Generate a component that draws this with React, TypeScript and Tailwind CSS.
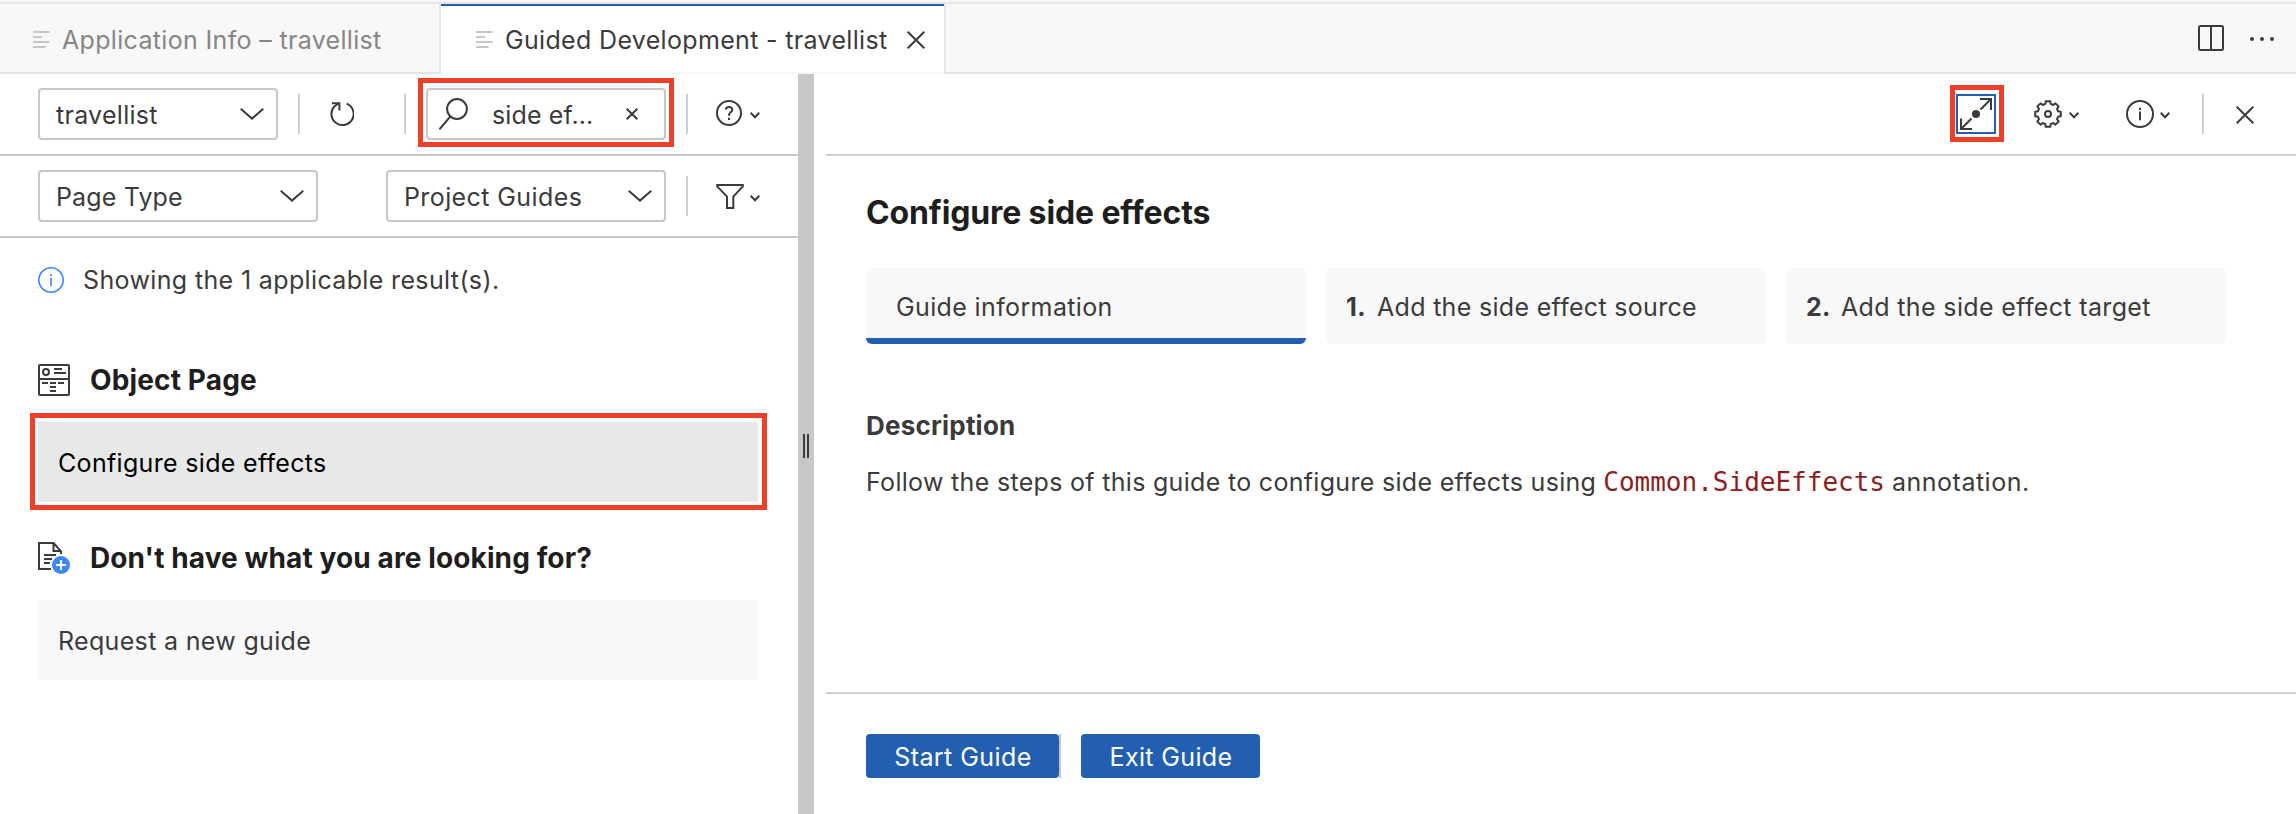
import React from "react";

const INK = "#3b3b3b";

function LinesIcon() {
  return (
    <svg width="17" height="18" viewBox="0 0 17 18" fill="#c6c6c6" className="shrink-0">
      <path d="M0 0h16.5v2H0zM0 5h9v2H0zM0 10h16.5v2H0zM0 15h12.5v2H0z" />
    </svg>
  );
}

function CloseIcon({ size = 18 }: { size?: number }) {
  return (
    <svg width={size} height={size} viewBox={`0 0 ${size} ${size}`} fill="none" stroke={INK} strokeWidth="2" className="shrink-0">
      <path d={`M.7 .7L${size - 0.7} ${size - 0.7}M${size - 0.7} .7L.7 ${size - 0.7}`} />
    </svg>
  );
}

function ChevronIcon() {
  return (
    <svg width="24" height="12" viewBox="0 0 24 12" fill="none" stroke={INK} strokeWidth="2" className="shrink-0">
      <path d="M.7 .8L12 10.6L23.3 .8" />
    </svg>
  );
}

function SmallChevron({ className }: { className: string }) {
  return (
    <svg width="10" height="7" viewBox="0 0 10 7" fill="none" stroke={INK} strokeWidth="2" className={`shrink-0 ${className}`}>
      <path d="M.7 .8L5 5.2L9.3 .8" />
    </svg>
  );
}

function RefreshIcon() {
  return (
    <svg width="24" height="26" viewBox="0 0 24 26" fill="none" stroke={INK} strokeWidth="2" className="shrink-0">
      <path d="M16.6 2.6A11.1 11.1 0 1 1 4.4 5.4L8.6 2.2" />
      <path d="M2 2.2H9.4V9.4" />
    </svg>
  );
}

function SearchIcon() {
  return (
    <svg width="30" height="33" viewBox="0 0 30 33" fill="none" stroke={INK} strokeWidth="2" className="shrink-0">
      <circle cx="18" cy="11" r="9.9" />
      <path d="M.4 31.4L11.2 18.6" />
    </svg>
  );
}

function HelpIcon() {
  return (
    <svg width="26" height="26" viewBox="0 0 26 26" fill="none" stroke={INK} strokeWidth="2" className="shrink-0">
      <circle cx="13" cy="13" r="12" />
      <path d="M9.8 9.6C9.9 7.9 11.2 7 13 7C14.9 7 16.3 8 16.3 9.8C16.3 12.2 13 12.4 13 15V15.8" />
      <path d="M13 17.8V20" />
    </svg>
  );
}

function InfoIcon({ size, color, width }: { size: number; color: string; width: number }) {
  const c = size / 2;
  return (
    <svg width={size} height={size} viewBox={`0 0 ${size} ${size}`} fill="none" stroke={color} strokeWidth={width} className="shrink-0">
      <circle cx={c} cy={c} r={c - width / 2} />
      <path d={`M${c} ${c - 6.2}v2.2M${c} ${c - 2.6}v8.8`} />
    </svg>
  );
}

function FunnelIcon() {
  return (
    <svg width="28" height="26" viewBox="0 0 28 26" fill="none" stroke={INK} strokeWidth="2" className="shrink-0">
      <path d="M1.2 2H26.8V3.4L17.3 13.6V25H11V13.6L1.2 3.4Z" />
    </svg>
  );
}

function ExpandIcon() {
  return (
    <svg width="32" height="32" viewBox="0 0 32 32" fill="none" stroke={INK} strokeWidth="2" className="shrink-0">
      <path d="M20 1H31V12M31 1L20.5 11.5M1 20.5V31H12M1 31L11.5 20.5" />
      <circle cx="16" cy="16" r="4" fill={INK} stroke="none" />
    </svg>
  );
}

const gearPoints = Array.from({ length: 8 })
  .flatMap((_, k) =>
    [
      [-15, 10.4],
      [-10, 13],
      [10, 13],
      [15, 10.4],
    ].map(([deg, r]) => {
      const a = ((k * 45 + deg) * Math.PI) / 180;
      return `${(14 + r * Math.sin(a)).toFixed(2)},${(14 - r * Math.cos(a)).toFixed(2)}`;
    }),
  )
  .join(" ");

function GearIcon() {
  return (
    <svg width="28" height="28" viewBox="0 0 28 28" fill="none" stroke={INK} strokeWidth="2" strokeLinejoin="round" className="shrink-0">
      <polygon points={gearPoints} />
      <circle cx="14" cy="14" r="3" />
    </svg>
  );
}

function SplitIcon() {
  return (
    <svg width="26" height="26" viewBox="0 0 26 26" fill="none" stroke={INK} strokeWidth="2" className="shrink-0">
      <rect x="1" y="1" width="24" height="24" rx="1.5" />
      <path d="M13 1V25" />
    </svg>
  );
}

function ObjectPageIcon() {
  return (
    <svg width="32" height="32" viewBox="0 0 32 32" fill="none" stroke={INK} strokeWidth="2" className="shrink-0">
      <rect x="1" y="1" width="30" height="30" rx="1" />
      <circle cx="8" cy="8" r="3" />
      <path d="M16 5H24M16 9H28M1 15H31M4 19H10M12 19H18M20 19H26M12 23H18M12 27H18" />
    </svg>
  );
}

function NewGuideIcon() {
  return (
    <svg width="32" height="32" viewBox="0 0 32 32" fill="none" stroke={INK} strokeWidth="2" className="shrink-0">
      <path d="M13 27H1V1H15.6L23 9.4V12M15.5 1V9H23" />
      <path d="M6 13H18M6 17H14M6 21H12" />
      <circle cx="23" cy="23" r="9" fill="#3b87f7" stroke="none" />
      <path d="M23 18V28M18 23H28" stroke="#fff" />
    </svg>
  );
}

function Select({ label, className }: { label: string; className: string }) {
  return (
    <div className={`flex h-[52px] shrink-0 items-center justify-between rounded-[4px] border-2 border-[#c8c8c8] pr-3 pl-4 ${className}`}>
      <span className="pt-0.5">{label}</span>
      <ChevronIcon />
    </div>
  );
}

function Divider({ className }: { className: string }) {
  return <div className={`h-10 w-0.5 shrink-0 bg-[#cfcfcf] ${className}`} />;
}

function LeftPanel() {
  return (
    <section className="flex w-[798px] shrink-0 flex-col">
      <div className="flex h-[82px] items-center border-b-2 border-[#c8c8c8] pl-[38px]">
        <Select label="travellist" className="w-[240px] tracking-[0.28px]" />
        <Divider className="ml-5" />
        <div className="ml-[30px] flex w-6">
          <RefreshIcon />
        </div>
        <Divider className="ml-[50px]" />
        <div className="relative ml-5 flex h-[52px] w-[240px] items-center rounded-[4px] border-2 border-[#c8c8c8] pl-[11px]">
          <SearchIcon />
          <span className="ml-[23px] w-[134px] pt-0.5 tracking-[0.12px]">side ef...</span>
          <CloseIcon size={12} />
          <div className="absolute -top-3 -right-[10px] -bottom-[9px] -left-[10px] border-5 border-[#ee4027]" />
        </div>
        <Divider className="ml-5" />
        <div className="ml-7 flex items-center pb-0.5">
          <HelpIcon />
          <SmallChevron className="mt-1 ml-2" />
        </div>
      </div>
      <div className="flex h-[82px] items-center border-b-2 border-[#c8c8c8] pl-[38px]">
        <Select label="Page Type" className="w-[280px] tracking-[0.15px]" />
        <Select label="Project Guides" className="ml-[68px] w-[280px] tracking-[0.4px]" />
        <Divider className="ml-5" />
        <div className="ml-7 flex items-center">
          <FunnelIcon />
          <SmallChevron className="mt-1 ml-1.5" />
        </div>
      </div>
      <div className="flex flex-col pr-10 pl-[38px]">
        <div className="mt-6 flex h-9 items-center gap-[19px]">
          <InfoIcon size={26} color="#3b87f7" width={1.6} />
          <span>Showing the 1 applicable result(s).</span>
        </div>
        <h2 className="mt-16 flex h-9 items-center gap-5 text-[28px] font-bold tracking-[0.14px] text-[#1e1e1e]">
          <ObjectPageIcon />
          Object Page
        </h2>
        <div className="relative mt-6 flex h-20 items-center bg-[#e8e8e8] pt-px pl-5 tracking-[0.32px] text-black">
          Configure side effects
          <div className="absolute -top-[9px] -right-[9px] -bottom-2 -left-2 border-5 border-[#ee4027]" />
        </div>
        <h2 className="mt-[38px] flex h-9 items-center gap-5 text-[28px] font-bold tracking-[0.11px] text-[#1e1e1e]">
          <NewGuideIcon />
          Don't have what you are looking for?
        </h2>
        <div className="mt-6 flex h-20 items-center bg-[#f8f8f8] pt-0.5 pl-5 tracking-[0.33px]">Request a new guide</div>
      </div>
    </section>
  );
}

function RightPanel() {
  return (
    <section className="ml-3 flex min-w-0 flex-1 flex-col">
      <div className="flex h-[82px] items-center justify-end border-b-2 border-[#cfcfcf] pr-[42px]">
        <div className="relative flex h-10 w-10 items-center justify-center border-2 border-[#235fb0]">
          <ExpandIcon />
          <div className="absolute -top-[11px] -right-[10px] -bottom-[10px] -left-2 border-5 border-[#ee4027]" />
        </div>
        <div className="ml-[38px] flex items-center">
          <GearIcon />
          <SmallChevron className="mt-[3px] ml-[7px]" />
        </div>
        <div className="ml-[47px] flex items-center">
          <InfoIcon size={28} color={INK} width={2} />
          <SmallChevron className="mt-[3px] ml-1.5" />
        </div>
        <Divider className="mr-8 ml-8" />
        <div className="pt-0.5">
          <CloseIcon />
        </div>
      </div>
      <div className="flex flex-1 flex-col px-10">
        <h1 className="mt-[37px] h-10 text-[32px] leading-10 font-bold tracking-[-0.13px] text-[#1e1e1e]">Configure side effects</h1>
        <div className="mt-[35px] flex gap-5">
          <div className="flex h-[76px] w-[440px] flex-col justify-between overflow-hidden rounded-[6px] bg-[#f8f8f8]">
            <span className="pt-[21px] pl-[30px] tracking-[0.37px]">Guide information</span>
            <div className="h-1.5 bg-[#235fb0]" />
          </div>
          <div className="flex h-[76px] w-[440px] items-center rounded-[6px] bg-[#f8f8f8] pt-0.5 pl-5">
            <b className="w-[31px]">1.</b>
            <span className="tracking-[0.31px]">Add the side effect source</span>
          </div>
          <div className="flex h-[76px] w-[440px] items-center rounded-[6px] bg-[#f8f8f8] pt-0.5 pl-5">
            <b className="w-[35px]">2.</b>
            <span>Add the side effect target</span>
          </div>
        </div>
        <h3 className="mt-16 h-9 text-[26px] leading-9 font-bold tracking-[0.22px]">Description</h3>
        <p className="mt-5 h-9 leading-9 tracking-[0.31px] whitespace-nowrap">
          Follow the steps of this guide to configure side effects using
          <code className="ml-[7px] font-['DejaVu_Sans_Mono',monospace] text-[26px] tracking-normal text-[#8f1d1d]">Common.SideEffects</code>
          <span className="ml-[7px] tracking-[0.5px]">annotation.</span>
        </p>
      </div>
      <div className="flex h-[122px] gap-5 border-t-2 border-[#cfcfcf] pt-10 pl-10">
        <div className="flex h-11">
          <button className="flex w-[193px] items-center justify-center rounded-[4px] bg-[#235fb0] pt-0.5 pl-px tracking-[0.45px] text-white">Start Guide</button>
          <div className="w-0.5 bg-[#c8c8c8]" />
        </div>
        <button className="flex h-11 w-[179px] items-center justify-center rounded-[4px] bg-[#235fb0] pt-0.5 pl-px text-white">Exit Guide</button>
      </div>
    </section>
  );
}

export default function App() {
  return (
    <div className="flex h-[814px] w-[2296px] flex-col overflow-hidden bg-white font-[Inter,sans-serif] text-[25px] leading-9 tracking-[0.36px] whitespace-nowrap text-[#3b3b3b]">
      <header className="flex h-[74px] shrink-0 border-t-2 border-[#f7f7f7] bg-[#f8f8f8]">
        <div className="flex w-full border-t-2 border-[#e5e5e5]">
          <div className="flex w-[441px] items-center gap-[13px] border-r-2 border-b-2 border-[#e5e5e5] pt-1 pl-[33px] tracking-[0.33px] text-[#868686]">
            <LinesIcon />
            <span className="-ml-px">Application Info – travellist</span>
          </div>
          <div className="flex w-[503px] items-center border-t-2 border-b-2 border-t-[#235fb0] border-b-[#f8f8f8] bg-white pt-0.5 pl-[35px] tracking-[0.33px]">
            <LinesIcon />
            <span className="ml-3">Guided Development - travellist</span>
            <div className="ml-5">
              <CloseIcon />
            </div>
          </div>
          <div className="flex flex-1 items-center justify-end border-b-2 border-l-2 border-[#e5e5e5] pr-[22px]">
            <SplitIcon />
            <svg width="24" height="4" viewBox="0 0 24 4" fill={INK} className="mt-0.5 ml-[26px]">
              <circle cx="2" cy="2" r="2" />
              <circle cx="12" cy="2" r="2" />
              <circle cx="22" cy="2" r="2" />
            </svg>
          </div>
        </div>
      </header>
      <main className="flex min-h-0 flex-1">
        <LeftPanel />
        <div className="flex w-4 shrink-0 justify-center gap-0.5 bg-[#c8c8c8] pt-[360px]">
          <div className="h-6 w-0.5 bg-[#3b3b3b]" />
          <div className="h-6 w-0.5 bg-[#3b3b3b]" />
        </div>
        <RightPanel />
      </main>
    </div>
  );
}
